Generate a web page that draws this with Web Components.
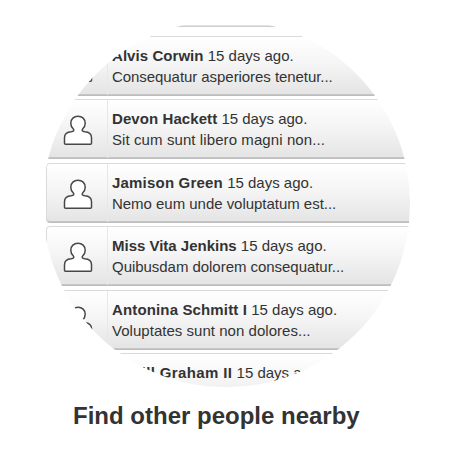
<!DOCTYPE html>
<html lang="en">
<head>
<meta charset="utf-8">
<title>People nearby</title>
<style>
html, body { margin: 0; background: #fff; }
body { width: 451px; height: 451px; overflow: hidden; font-family: "Liberation Sans", Arial, sans-serif; color: #333; }
</style>
</head>
<body>
<nearby-feature>
  <round-frame>
    <list-edge></list-edge>
    <person-row name="Alvis Corwin" when="15 days ago." style="--gap:3px;--name:.06px;--note:-.06px">Consequatur asperiores tenetur...</person-row>
    <person-row name="Devon Hackett" when="15 days ago." style="--gap:4px;--name:.08px;--note:.09px">Sit cum sunt libero magni non...</person-row>
    <person-row name="Jamison Green" when="15 days ago." style="--gap:3px;--name:.2px;--note:-.03px">Nemo eum unde voluptatum est...</person-row>
    <person-row name="Miss Vita Jenkins" when="15 days ago." style="--gap:4px;--name:-.01px;--note:-.04px">Quibusdam dolorem consequatur...</person-row>
    <person-row name="Antonina Schmitt I" when="15 days ago." style="--gap:3px;--name:.14px;--note:.03px">Voluptates sunt non dolores...</person-row>
    <person-row name="Terrill Graham II" when="15 days ago." style="--name:.38px"></person-row>
  </round-frame>
  <span slot="caption">Find other people nearby</span>
</nearby-feature>
<script>
const define = (tag, html, init) => customElements.define(tag, class extends HTMLElement {
  constructor() {
    super();
    this.attachShadow({ mode: 'open' }).innerHTML = html;
  }
  connectedCallback() { if (init) init(this, this.shadowRoot); }
});

define('person-icon', `
<style>:host{display:block;width:32px;height:32px}svg{display:block}</style>
<svg width="32" height="32" viewBox="0 0 32 32" fill="#fff" stroke="#484848" stroke-width="1.5" stroke-linejoin="round">
  <path d="M3.5 30.2Q2.5 30.2 2.5 29.2V23.8C2.5 19.6 5 17.9 9.2 17.7C12 17.5 12.4 16.1 11.2 14.8C9.6 13.2 8.8 11.4 8.8 9.2C8.8 5 11.9 2.2 16 2.2S23.2 5 23.2 9.2C23.2 11.4 22.4 13.2 20.8 14.8C19.6 16.1 20 17.5 22.8 17.7C27 17.9 29.5 19.6 29.5 23.8V29.2Q29.5 30.2 28.5 30.2Z"/>
</svg>`);

define('list-edge', `
<style>
:host{display:block;height:11px;box-sizing:border-box;border-top:1px solid #e2e2e2}
:host::before{content:"";display:block;height:1px;background:#cfcfcf}
</style>`);

define('person-row', `
<style>
:host{display:grid;grid-template-columns:61px 1fr;box-sizing:border-box;height:60px;margin-bottom:var(--gap,0);
  border:1px solid #dadada;border-bottom:1px solid #bdbdbd;border-radius:4px;
  background:linear-gradient(#fff,#f5f5f5 45%,#e4e4e4);box-shadow:inset 0 -1px #c6c6c6}
.avatar{display:flex;align-items:flex-start;padding:14px 0 0 14.5px;border-right:1px solid #e8e8e8;box-sizing:border-box}
.text{padding:8px 0 0 4px;font-size:15px;line-height:21px;white-space:nowrap}
p{margin:0}
b{letter-spacing:var(--name,0)}
.note{letter-spacing:var(--note,0)}
</style>
<div class="avatar"><person-icon></person-icon></div>
<div class="text"><p><b></b> <span></span></p><p class="note"><slot></slot></p></div>`, (el, root) => {
  root.querySelector('b').textContent = el.getAttribute('name');
  root.querySelector('span').textContent = el.getAttribute('when');
});

define('round-frame', `
<style>
:host{display:block;width:451px;height:388px;clip-path:circle(183.7px at 226.3px 203.6px)}
.list{padding:25px 0 0 46px;width:390px}
</style>
<div class="list"><slot></slot></div>`);

define('nearby-feature', `
<style>
:host{display:block;height:451px}
h2{margin:0;padding:13px 0 0 73px;font-size:24px;line-height:30px;font-weight:bold;white-space:nowrap}
</style>
<slot></slot>
<h2><slot name="caption"></slot></h2>`);
</script>
</body>
</html>
